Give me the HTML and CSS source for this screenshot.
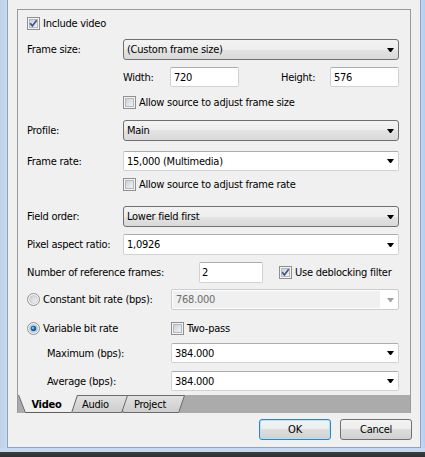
FILE: index.html
```html
<!DOCTYPE html>
<html>
<head>
<meta charset="utf-8">
<title>Custom template</title>
<link rel="stylesheet" href="styles.css">
</head>
<body>
<div class="screen">
  <div class="client">
    <div class="tabctl">
      <div class="page">
        <div class="row chk mt7">
          <svg class="cb" width="13" height="13" viewBox="0 0 13 13"><defs><linearGradient id="cbg" x1="0" y1="0" x2="1" y2="1"><stop offset="0" stop-color="#c9ced6"/><stop offset="1" stop-color="#f5f5f5"/></linearGradient></defs><rect x=".5" y=".5" width="12" height="12" fill="#f4f4f4" stroke="#8e8f8f"/><rect x="2.5" y="2.5" width="8" height="8" fill="url(#cbg)" stroke="#b3b7be"/><path d="M3.2 6.3 L5.4 8.9 L9.7 3.3" fill="none" stroke="#3e5494" stroke-width="1.7"/></svg>
          <span>Include video</span>
        </div>

        <div class="row mt9">
          <span class="lbl">Frame size:</span>
          <div class="combo"><span class="val">(Custom frame size)</span><svg class="arrow" width="7" height="4" viewBox="0 0 7 4"><polygon points="0,0 7,0 4,4 3,4" fill="#000"/></svg></div>
        </div>

        <div class="row in-row mt7">
          <span class="indent"></span>
          <span class="w-lbl">Width:</span>
          <div class="edit small"><span class="val">720</span></div>
          <span class="h-lbl">Height:</span>
          <div class="edit small"><span class="val">576</span></div>
        </div>

        <div class="row chk mt9">
          <span class="indent"></span>
          <svg class="cb" width="13" height="13" viewBox="0 0 13 13"><rect x=".5" y=".5" width="12" height="12" fill="#f4f4f4" stroke="#8e8f8f"/><rect x="2.5" y="2.5" width="8" height="8" fill="url(#cbg)" stroke="#b3b7be"/></svg>
          <span>Allow source to adjust frame size</span>
        </div>

        <div class="row mt11">
          <span class="lbl">Profile:</span>
          <div class="combo"><span class="val">Main</span><svg class="arrow" width="7" height="4" viewBox="0 0 7 4"><polygon points="0,0 7,0 4,4 3,4" fill="#000"/></svg></div>
        </div>

        <div class="row in-row mt10">
          <span class="lbl">Frame rate:</span>
          <div class="edit"><span class="val">15,000 (Multimedia)</span><svg class="arrow" width="7" height="4" viewBox="0 0 7 4"><polygon points="0,0 7,0 4,4 3,4" fill="#000"/></svg></div>
        </div>

        <div class="row chk mt7">
          <span class="indent"></span>
          <svg class="cb" width="13" height="13" viewBox="0 0 13 13"><rect x=".5" y=".5" width="12" height="12" fill="#f4f4f4" stroke="#8e8f8f"/><rect x="2.5" y="2.5" width="8" height="8" fill="url(#cbg)" stroke="#b3b7be"/></svg>
          <span>Allow source to adjust frame rate</span>
        </div>

        <div class="row mt15">
          <span class="lbl">Field order:</span>
          <div class="combo"><span class="val">Lower field first</span><svg class="arrow" width="7" height="4" viewBox="0 0 7 4"><polygon points="0,0 7,0 4,4 3,4" fill="#000"/></svg></div>
        </div>

        <div class="row mt7">
          <span class="lbl">Pixel aspect ratio:</span>
          <div class="edit"><span class="val">1,0926</span><svg class="arrow" width="7" height="4" viewBox="0 0 7 4"><polygon points="0,0 7,0 4,4 3,4" fill="#000"/></svg></div>
        </div>

        <div class="row mt7">
          <span class="lbl wide">Number of reference frames:</span>
          <div class="edit ref"><span class="val">2</span></div>
          <svg class="cb deblock" width="13" height="13" viewBox="0 0 13 13"><rect x=".5" y=".5" width="12" height="12" fill="#f4f4f4" stroke="#8e8f8f"/><rect x="2.5" y="2.5" width="8" height="8" fill="url(#cbg)" stroke="#b3b7be"/><path d="M3.2 6.3 L5.4 8.9 L9.7 3.3" fill="none" stroke="#3e5494" stroke-width="1.7"/></svg>
          <span>Use deblocking filter</span>
        </div>

        <div class="row mt6">
          <div class="opt">
            <svg class="rb" width="13" height="13" viewBox="0 0 13 13"><defs><linearGradient id="rbg" x1="0" y1="0" x2="1" y2="1"><stop offset="0" stop-color="#c6cbd3"/><stop offset="1" stop-color="#f6f6f6"/></linearGradient></defs><circle cx="6.5" cy="6.5" r="6" fill="#f4f4f4" stroke="#8e8f8f"/><circle cx="6.5" cy="6.5" r="4" fill="url(#rbg)" stroke="#b8bcc2" stroke-width=".6"/></svg>
            <span>Constant bit rate (bps):</span>
          </div>
          <div class="edit disabled"><span class="val">768.000</span><span class="drop"><svg class="arrow" width="7" height="4" viewBox="0 0 7 4"><polygon points="0,0 7,0 4,4 3,4" fill="#a2a2a2"/></svg></span></div>
        </div>

        <div class="row chk mt12">
          <div class="opt">
            <svg class="rb" width="13" height="13" viewBox="0 0 13 13"><circle cx="6.5" cy="6.5" r="6" fill="#f4f4f4" stroke="#8e8f8f"/><circle cx="6.5" cy="6.5" r="4" fill="#cfe4f6" stroke="#8aa7c4" stroke-width=".6"/><circle cx="6.5" cy="6.5" r="2.8" fill="#1f5f9f"/><circle cx="6" cy="6" r="1.2" fill="#7fbbe8"/></svg>
            <span>Variable bit rate</span>
          </div>
          <svg class="cb" width="13" height="13" viewBox="0 0 13 13"><rect x=".5" y=".5" width="12" height="12" fill="#f4f4f4" stroke="#8e8f8f"/><rect x="2.5" y="2.5" width="8" height="8" fill="url(#cbg)" stroke="#b3b7be"/></svg>
          <span>Two-pass</span>
        </div>

        <div class="row in-row mt8">
          <span class="opt sub">Maximum (bps):</span>
          <div class="edit"><span class="val">384.000</span><svg class="arrow" width="7" height="4" viewBox="0 0 7 4"><polygon points="0,0 7,0 4,4 3,4" fill="#000"/></svg></div>
        </div>

        <div class="row in-row mt8">
          <span class="opt sub">Average (bps):</span>
          <div class="edit"><span class="val">384.000</span><svg class="arrow" width="7" height="4" viewBox="0 0 7 4"><polygon points="0,0 7,0 4,4 3,4" fill="#000"/></svg></div>
        </div>
      </div>

      <div class="tabstrip">
        <div class="tab video">
          <svg class="tab-shape" width="60" height="18" viewBox="0 0 60 18"><polygon points="0,0 60,0 54,18 7,18" fill="#f0f0f0"/><polyline points="0.5,0 7.3,17.5 53.7,17.5 59.5,0" fill="none" stroke="#5e5e5e"/></svg>
          <span class="tab-text">Video</span>
        </div>
        <div class="tab audio">
          <svg class="tab-shape" width="62" height="18" viewBox="0 0 62 18"><defs><linearGradient id="tg" x1="0" y1="0" x2="0" y2="1"><stop offset="0" stop-color="#e2e2e2"/><stop offset="1" stop-color="#cdcdcd"/></linearGradient></defs><polygon points="0.5,0.5 61.5,0.5 55.7,17.5 6.3,17.5" fill="url(#tg)" stroke="#6a6a6a"/></svg>
          <span class="tab-text">Audio</span>
        </div>
        <div class="tab project">
          <svg class="tab-shape" width="68" height="18" viewBox="0 0 68 18"><polygon points="0.5,0.5 67.5,0.5 61.7,17.5 6.3,17.5" fill="url(#tg)" stroke="#6a6a6a"/></svg>
          <span class="tab-text">Project</span>
        </div>
      </div>
    </div>

    <div class="buttons">
      <button class="btn default">OK</button>
      <button class="btn">Cancel</button>
    </div>
  </div>
  <div class="bottom-frame"></div>
</div>
</body>
</html>
```

FILE: styles.css
```css
* { box-sizing: border-box; }

html, body {
  margin: 0;
  padding: 0;
}

body {
  width: 425px;
  height: 457px;
  overflow: hidden;
  font-family: "DejaVu Sans Condensed", "DejaVu Sans", sans-serif;
  font-size: 11px;
  letter-spacing: -0.25px;
  color: #000;
}

.screen {
  width: 425px;
  height: 457px;
  display: flex;
  flex-direction: column;
  background: linear-gradient(90deg, #bfd2ea 0, #c9daef 7px, #c2d8f2 421px, #b4cfee 425px);
}

.client {
  margin-left: 7px;
  width: 414px;
  height: 448px;
  border: 1px solid #8ea3bd;
  border-top: none;
  background: #f0f0f0;
  padding: 9px 8px 0 9px;
  display: flex;
  flex-direction: column;
}

.tabctl {
  width: 394px;
  height: 404px;
  border: 1px solid #999a9e;
  border-bottom: none;
  display: flex;
  flex-direction: column;
}

.page {
  flex: 1;
  padding: 0 11px 0 9px;
  display: flex;
  flex-direction: column;
}

.row {
  display: flex;
  align-items: center;
  height: 21px;
  flex-shrink: 0;
  white-space: nowrap;
}
.row.in-row { height: 20px; }
.row.chk { height: 13px; }

.mt6 { margin-top: 6px; }
.mt7 { margin-top: 7px; }
.mt8 { margin-top: 8px; }
.mt9 { margin-top: 9px; }
.mt10 { margin-top: 10px; }
.mt11 { margin-top: 11px; }
.mt12 { margin-top: 12px; }
.mt15 { margin-top: 15px; }

.lbl { width: 96px; flex-shrink: 0; }
.lbl.wide { width: 172px; }
.indent { width: 96px; flex-shrink: 0; }

.cb, .rb { flex-shrink: 0; margin-right: 3px; display: block; }
.cb.deblock { margin-left: 16px; }

.opt {
  width: 144px;
  flex-shrink: 0;
  display: flex;
  align-items: center;
}
.opt.sub { padding-left: 20px; }

.w-lbl { width: 47px; flex-shrink: 0; }
.h-lbl { width: 49px; margin-left: 42px; flex-shrink: 0; }

.combo {
  flex: 1;
  height: 21px;
  border: 1px solid #707070;
  border-radius: 3px;
  background: linear-gradient(#f3f3f3 0, #ededed 50%, #e3e3e3 50%, #d9d9d9 100%);
  display: flex;
  align-items: center;
  padding: 0 4px 0 3px;
}

.edit {
  flex: 1;
  height: 100%;
  border: 1px solid #cfd1d6;
  border-top-color: #abadb3;
  border-radius: 2px;
  background: #fff;
  display: flex;
  align-items: center;
  padding: 0 4px 0 3px;
}
.edit.small { flex: none; width: 69px; }
.edit.ref { flex: none; width: 64px; padding-left: 2px; }

.edit.disabled {
  border-color: #c9cbcf;
  background: #fff;
  color: #6d6d6d;
  padding: 0;
}
.edit.disabled .val {
  align-self: stretch;
  display: flex;
  align-items: center;
  padding-left: 3px;
  margin: 1px 0 1px 1px;
  background: #f0f0f0;
}
.edit.disabled .drop {
  width: 18px;
  display: flex;
  justify-content: flex-end;
  padding-right: 4px;
}

.val { flex: 1; }
.arrow { display: block; flex-shrink: 0; }

.tabstrip {
  height: 18px;
  flex-shrink: 0;
  background: #ababab;
  display: flex;
}

.tab {
  position: relative;
  height: 18px;
  display: flex;
  align-items: center;
  justify-content: center;
  flex-shrink: 0;
}
.tab-shape { position: absolute; left: 0; top: 0; }
.tab-text { position: relative; }

.tab.video { width: 60px; z-index: 3; font-weight: bold; padding-right: 3px; }
.tab.audio { width: 62px; margin-left: -12px; z-index: 2; padding-right: 3px; }
.tab.project { width: 68px; margin-left: -11px; z-index: 1; padding-right: 2px; }

.buttons {
  display: flex;
  justify-content: flex-end;
  gap: 9px;
  margin-top: 6px;
}

.btn {
  width: 72px;
  height: 21px;
  padding: 0;
  font: inherit;
  letter-spacing: inherit;
  color: #000;
  border: 1px solid #707070;
  border-radius: 3px;
  background: linear-gradient(#f3f3f3 0, #ececec 50%, #dddddd 50%, #d1d1d1 100%);
}
.btn.default {
  border-color: #3c7fb1;
  box-shadow: inset 0 0 0 1px #a8e6fb;
}

.bottom-frame {
  height: 9px;
  background: linear-gradient(#c6d9ef 0, #c6d9ef 4px, #3d3e40 4px, #2e2f31 9px);
}
```
